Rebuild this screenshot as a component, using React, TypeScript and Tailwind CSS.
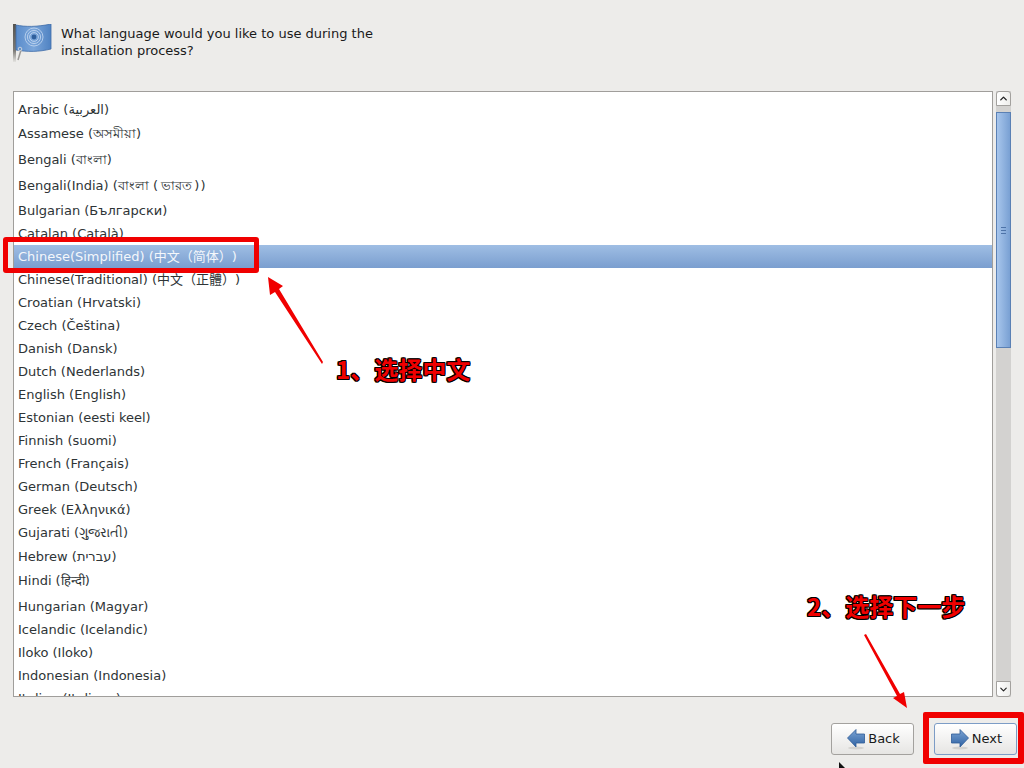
import { ChevronDown, ChevronUp } from 'lucide-react';

const languages = [
  { label: 'Amharic (አማርኛ)', height: 'h-[23px]' },
  { label: 'Arabic (العربية)', height: 'h-[24px] pt-[2px]' },
  { label: 'Assamese (অসমীয়া)', height: 'h-[25px]' },
  { label: 'Bengali (বাংলা)', height: 'h-[26px] pt-[2px]' },
  { label: 'Bengali(India) (বাংলা (\u2009ভারত\u2009)\u200a)', height: 'h-[27px]' },
  { label: 'Bulgarian (Български)', height: 'h-[23px]' },
  { label: 'Catalan (Català)', height: 'h-[23px]' },
  { label: 'Chinese(Simplified) (中文（简体）)', height: 'h-[23px]', selected: true },
  { label: 'Chinese(Traditional) (中文（正體）)', height: 'h-[23px]' },
  { label: 'Croatian (Hrvatski)', height: 'h-[23px]' },
  { label: 'Czech (Čeština)', height: 'h-[23px]' },
  { label: 'Danish (Dansk)', height: 'h-[23px]' },
  { label: 'Dutch (Nederlands)', height: 'h-[23px]' },
  { label: 'English (English)', height: 'h-[23px]' },
  { label: 'Estonian (eesti keel)', height: 'h-[23px]' },
  { label: 'Finnish (suomi)', height: 'h-[23px]' },
  { label: 'French (Français)', height: 'h-[23px]' },
  { label: 'German (Deutsch)', height: 'h-[23px]' },
  { label: 'Greek (Ελληνικά)', height: 'h-[23px]' },
  { label: 'Gujarati (ગુજરાતી)', height: 'h-[23px]' },
  { label: 'Hebrew (עברית)', height: 'h-[24px] pt-[2px]' },
  { label: 'Hindi (हिन्दी)', height: 'h-[27px] pb-[2px]' },
  { label: 'Hungarian (Magyar)', height: 'h-[23px]' },
  { label: 'Icelandic (Icelandic)', height: 'h-[23px]' },
  { label: 'Iloko (Iloko)', height: 'h-[23px]' },
  { label: 'Indonesian (Indonesia)', height: 'h-[23px]' },
  { label: 'Italian (Italiano)', height: 'h-[23px]' },
];

function Flag() {
  return (
    <svg width="40" height="40" viewBox="0 0 40 40" className="shrink-0">
      <defs>
        <linearGradient id="cloth" x1="0" y1="0" x2="1" y2="0">
          <stop offset="0" stopColor="#5a8ccb" />
          <stop offset="0.5" stopColor="#7ba6da" />
          <stop offset="1" stopColor="#4f82c2" />
        </linearGradient>
        <linearGradient id="pole" x1="0" y1="0" x2="0" y2="1">
          <stop offset="0" stopColor="#55534f" />
          <stop offset="0.7" stopColor="#7d7b77" />
          <stop offset="1" stopColor="#e4e3e0" />
        </linearGradient>
      </defs>
      <rect x="0" y="0" width="3" height="38" fill="url(#pole)" />
      <path d="M3 1 C12 3 24 3 38 0 L38 25 C26 28 14 28 3 26 Z" fill="url(#cloth)" stroke="#3f6ca8" strokeWidth="0.8" />
      <g fill="none" stroke="#bcd3ee" strokeWidth="0.9">
        <circle cx="21" cy="13" r="9" />
        <circle cx="21" cy="13" r="6.6" />
        <circle cx="21" cy="13" r="4.4" />
      </g>
      <circle cx="21" cy="13" r="2.4" fill="#2f5f9c" />
      <path d="M5 36 L8 26" stroke="#9a9895" strokeWidth="1.5" fill="none" />
      <circle cx="7" cy="25" r="1.8" fill="none" stroke="#d5d8dc" strokeWidth="0.9" />
    </svg>
  );
}

function NavArrow({ flip }: { flip?: boolean }) {
  return (
    <svg width="18" height="22" viewBox="0 0 18 22" className={flip ? 'shrink-0 -scale-x-100' : 'shrink-0'}>
      <defs>
        <linearGradient id={flip ? 'navNext' : 'navBack'} x1="0" y1="0" x2="0" y2="1">
          <stop offset="0" stopColor="#7ba3d3" />
          <stop offset="1" stopColor="#2f62a3" />
        </linearGradient>
      </defs>
      <ellipse cx="9" cy="20" rx="8" ry="1.5" fill="#d3d2cf" />
      <path
        d="M0.5 10 L9 1.5 L9 6 L17.5 6 L17.5 15 L9 15 L9 19 Z"
        fill={flip ? 'url(#navNext)' : 'url(#navBack)'}
        stroke="#2e5c98"
        strokeWidth="0.8"
      />
    </svg>
  );
}

function WizardButton({ label, focused, flip }: { label: string; focused?: boolean; flip?: boolean }) {
  return (
    <button
      type="button"
      className={`flex h-[32px] w-[83px] items-center justify-center gap-[3px] rounded-[3px] border bg-gradient-to-b from-white to-[#e6e5e3] pl-[2px] text-[13px] text-[#1a1a1a] ${
        focused ? 'border-[#7c9cc6]' : 'border-[#a3a19e]'
      }`}
    >
      <NavArrow flip={flip} />
      {label}
    </button>
  );
}

function Note({ className, children }: { className: string; children: string }) {
  return (
    <div
      className={`absolute whitespace-nowrap font-['Noto_Sans_CJK_SC',sans-serif] text-[24px] leading-[30px] font-bold text-[#f00000] [text-shadow:1px_1px_0_#000,-1px_0_0_#000,0_-1px_0_#000,1px_0_0_#000,0_1px_0_#000,-1px_-1px_0_#000,1px_-1px_0_#000,-1px_1px_0_#000] ${className}`}
    >
      {children}
    </div>
  );
}

export default function App() {
  return (
    <div className="relative flex h-[768px] w-[1024px] flex-col overflow-hidden bg-[#edecea] font-['DejaVu_Sans','Noto_Sans_CJK_SC',sans-serif] text-[13px] text-[#1a1a1a] [text-spacing-trim:space-all]">
      {/* Header */}
      <div className="flex h-[91px] shrink-0 gap-[8px] pt-[24px] pl-[13px]">
        <Flag />
        <p className="w-[340px] pt-px leading-[17px]">
          What language would you like to use during the installation process?
        </p>
      </div>

      {/* Language list */}
      <div className="flex h-[606px] shrink-0 pl-[13px]">
        <div className="h-full w-[980px] overflow-hidden border border-[#a09e9b] bg-white">
          <div className="-mt-[18px]">
            {languages.map((lang) => (
              <div
                key={lang.label}
                className={`flex items-center pl-[4px] ${lang.height} ${
                  lang.selected ? 'bg-gradient-to-b from-[#9fbee4] to-[#7a9ecf] text-[#f4f7fb]' : 'text-[#2e3436]'
                }`}
              >
                {lang.label}
              </div>
            ))}
          </div>
        </div>

        {/* Scrollbar */}
        <div className="ml-[3px] flex h-full w-[15px] flex-col bg-[#d3d2d0]">
          <div className="flex h-[15px] items-center justify-center rounded-t-[3px] border border-[#a3a19e] bg-gradient-to-r from-white to-[#eeeeec]">
            <ChevronUp className="h-[11px] w-[11px] text-[#222]" strokeWidth={3} />
          </div>
          <div className="mt-[6px] flex h-[236px] items-center justify-center border border-[#5a80b4] bg-gradient-to-r from-[#a8c6ec] to-[#79a0d3]">
            <div className="flex flex-col gap-[2px]">
              <div className="h-px w-[5px] bg-[#4d73a8]" />
              <div className="h-px w-[5px] bg-[#4d73a8]" />
              <div className="h-px w-[5px] bg-[#4d73a8]" />
            </div>
          </div>
          <div className="flex-1" />
          <div className="flex h-[16px] items-center justify-center rounded-b-[3px] border border-[#a3a19e] bg-gradient-to-r from-white to-[#eeeeec]">
            <ChevronDown className="h-[11px] w-[11px] text-[#222]" strokeWidth={2.5} />
          </div>
        </div>
      </div>

      {/* Footer */}
      <div className="flex justify-end gap-[20px] pt-[26px] pr-[7px]">
        <WizardButton label="Back" />
        <WizardButton label="Next" focused flip />
      </div>

      {/* Annotations */}
      <div className="absolute top-[237px] left-[3px] h-[36px] w-[256px] rounded-[3px] border-[5px] border-[#f00000]" />
      <div className="absolute top-[712px] left-[923px] h-[52px] w-[101px] rounded-[2px] border-[6px] border-[#f00000]" />
      <Note className="top-[354px] left-[336px]">1、选择中文</Note>
      <Note className="top-[591px] left-[807px]">2、选择下一步</Note>
      <svg className="absolute top-0 left-0" width="1024" height="768" viewBox="0 0 1024 768">
        <path d="M322 364 L323 362 L279 289 L283 286 L268 277 L270 295 L275 292 Z" fill="#f00000" />
        <path d="M864 635 L866 634 L900 694 L904 692 L907 708 L893 698 L897 696 Z" fill="#f00000" />
        <path d="M839 762 L839 768 L845 768 Z" fill="#111" />
      </svg>
    </div>
  );
}
